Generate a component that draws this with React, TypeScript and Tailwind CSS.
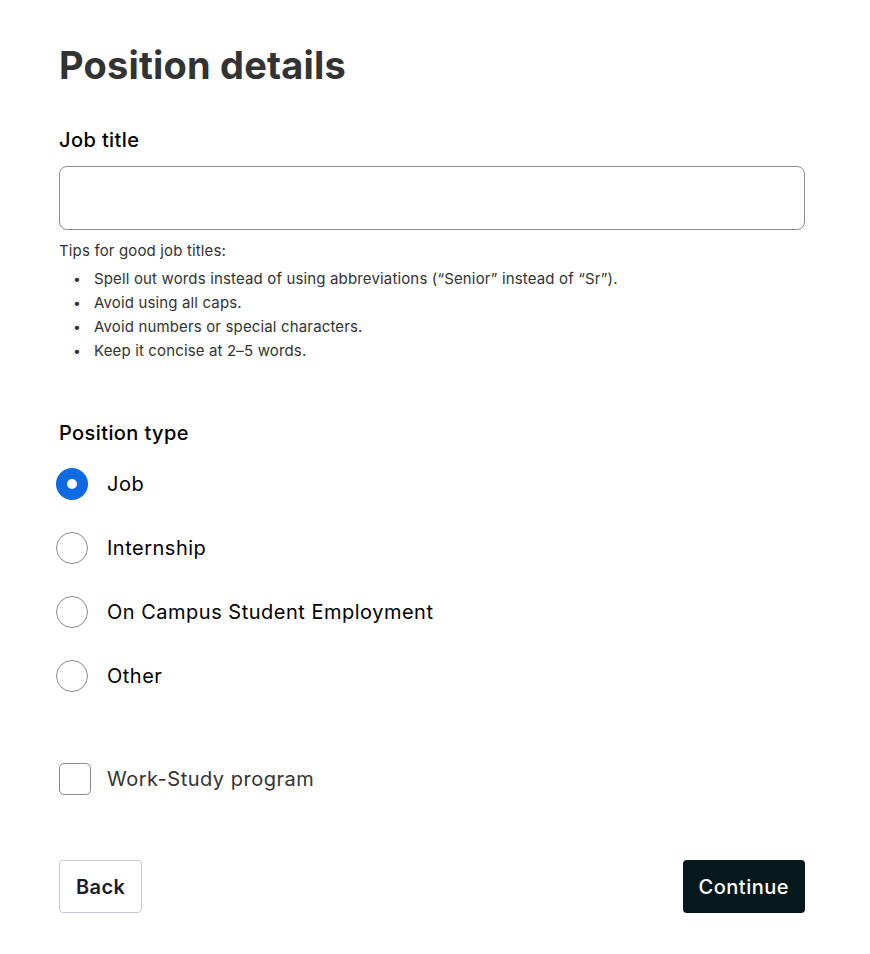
import { useState } from 'react';

const TIPS = [
  'Spell out words instead of using abbreviations (“Senior” instead of “Sr”).',
  'Avoid using all caps.',
  'Avoid numbers or special characters.',
  'Keep it concise at 2–5 words.',
];

const TYPES = ['Job', 'Internship', 'On Campus Student Employment', 'Other'];

function Radio({ checked }: { checked: boolean }) {
  if (checked) {
    return (
      <span className="flex h-8 w-8 shrink-0 items-center justify-center rounded-full bg-[#0d6ae0]">
        <span className="h-[10px] w-[10px] rounded-full bg-white" />
      </span>
    );
  }
  return <span className="h-8 w-8 shrink-0 rounded-full border border-[#8c8c8c] bg-white" />;
}

export default function App() {
  const [type, setType] = useState('Job');
  const [workStudy, setWorkStudy] = useState(false);
  const [title, setTitle] = useState('');

  return (
    <div className="min-h-screen bg-white pl-[59px] pr-[65px] pt-[43px] pb-[42px] font-['Inter',sans-serif] text-[#111]">
      <h1 className="text-[38px] font-bold leading-[44px] tracking-[0.005em] text-[#333]">Position details</h1>

      <label className="mt-[39px] block text-[20px] font-medium leading-[28px] tracking-[0.02em] text-black">
        Job title
      </label>
      <input
        value={title}
        onChange={(e) => setTitle(e.target.value)}
        className="mt-3 block h-16 w-[746px] rounded-lg border border-[#8f8f8f] px-4 text-[18px] outline-none"
      />

      <p className="mt-[11px] text-[15px] leading-5 tracking-[0.01em] text-[#333]">Tips for good job titles:</p>
      <ul className="mt-[6px] text-[15px] leading-6 tracking-[0.01em] text-[#333]">
        {TIPS.map((t) => (
          <li key={t} className="flex">
            <span className="w-[35px] pl-[14px] text-[14px]">•</span>
            <span>{t}</span>
          </li>
        ))}
      </ul>

      <h2 className="mt-[56px] text-[20px] font-medium leading-[28px] tracking-[0.02em] text-black">Position type</h2>
      <div className="mt-[13px] flex flex-col gap-4">
        {TYPES.map((t) => (
          <button
            key={t}
            onClick={() => setType(t)}
            className="-ml-[3px] flex h-12 items-center gap-[19px] text-left text-[20px] tracking-[0.025em] text-black"
          >
            <Radio checked={type === t} />
            <span>{t}</span>
          </button>
        ))}
      </div>

      <button
        onClick={() => setWorkStudy(!workStudy)}
        className="mt-[55px] flex h-12 items-center gap-4 text-[20px] tracking-[0.025em] text-[#333]"
      >
        <span className="h-8 w-8 shrink-0 rounded-[5px] border border-[#8c8c8c] bg-white" />
        <span>Work-Study program</span>
      </button>

      <div className="mt-[57px] flex w-[746px] items-center justify-between">
        <button className="h-[53px] rounded-[4px] border border-[#c9c7dc] px-4 text-[20px] font-semibold tracking-[0.02em] text-[#1c1c2b]">
          Back
        </button>
        <button className="h-[53px] rounded-[4px] bg-[#05191c] px-4 text-[20px] font-medium tracking-[0.025em] text-white">
          Continue
        </button>
      </div>
    </div>
  );
}
